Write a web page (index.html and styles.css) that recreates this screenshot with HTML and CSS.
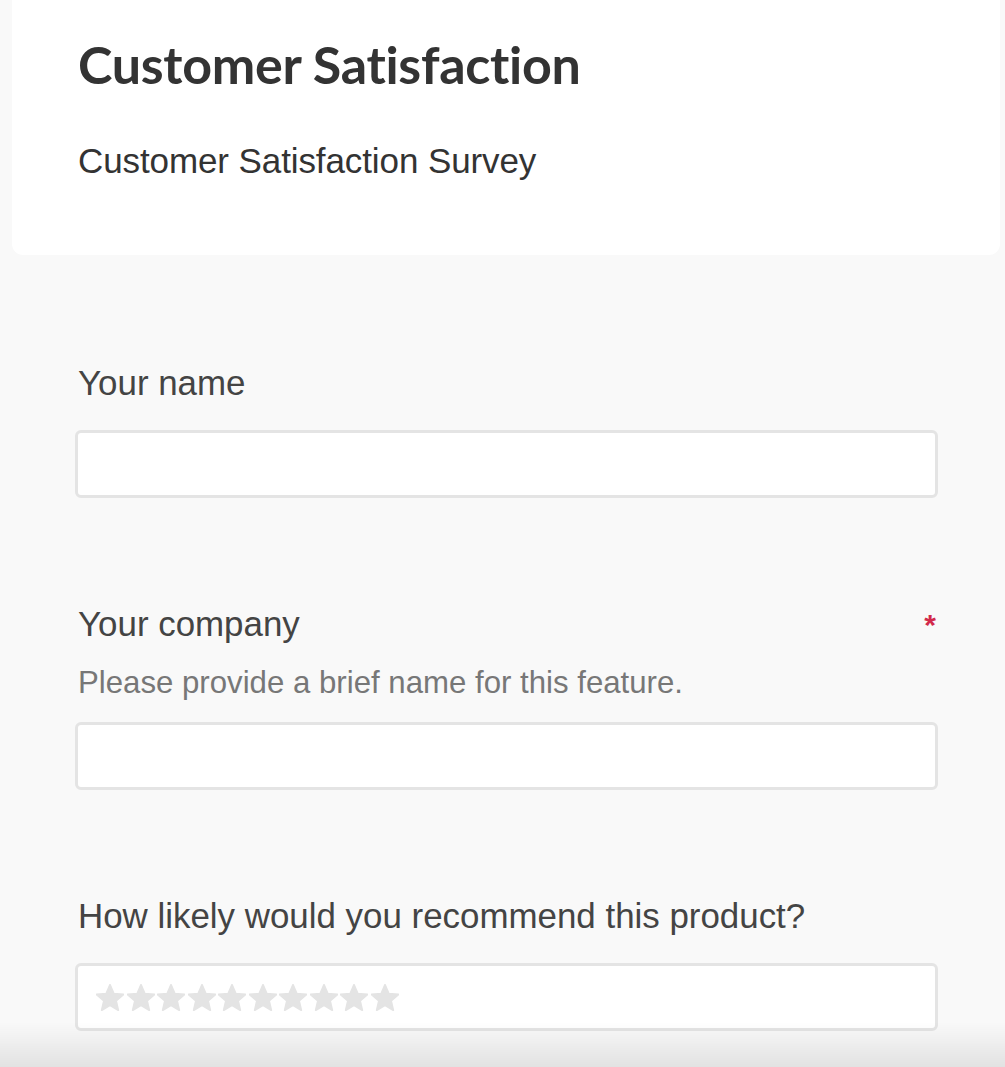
FILE: index.html
```html
<!DOCTYPE html>
<html lang="en">
<head>
<meta charset="utf-8">
<title>Customer Satisfaction</title>
<link rel="stylesheet" href="styles.css">
</head>
<body>
<header class="hero">
  <h1 class="hero-title">Customer Satisfaction</h1>
  <p class="hero-sub">Customer Satisfaction Survey</p>
</header>
<main class="form">
  <div class="field">
    <div class="label-row"><label class="label">Your name</label></div>
    <div class="input"></div>
  </div>
  <div class="field">
    <div class="label-row"><label class="label">Your company</label><span class="req">*</span></div>
    <p class="help">Please provide a brief name for this feature.</p>
    <div class="input"></div>
  </div>
  <div class="field">
    <div class="label-row"><label class="label">How likely would you recommend this product?</label></div>
    <div class="input stars">
      <svg class="star" viewBox="1.5 1.5 21 20"><path d="M12 17.27L18.18 21l-1.64-7.03L22 9.24l-7.19-.61L12 2 9.19 8.63 2 9.24l5.46 4.73L5.820 21z"/></svg>
      <svg class="star" viewBox="1.5 1.5 21 20"><path d="M12 17.27L18.18 21l-1.64-7.03L22 9.24l-7.19-.61L12 2 9.19 8.63 2 9.24l5.46 4.73L5.82 21z"/></svg>
      <svg class="star" viewBox="1.5 1.5 21 20"><path d="M12 17.27L18.18 21l-1.64-7.03L22 9.24l-7.19-.61L12 2 9.19 8.63 2 9.24l5.46 4.73L5.82 21z"/></svg>
      <svg class="star" viewBox="1.5 1.5 21 20"><path d="M12 17.27L18.18 21l-1.64-7.03L22 9.24l-7.19-.61L12 2 9.19 8.63 2 9.24l5.46 4.73L5.82 21z"/></svg>
      <svg class="star" viewBox="1.5 1.5 21 20"><path d="M12 17.27L18.18 21l-1.64-7.03L22 9.24l-7.19-.61L12 2 9.19 8.63 2 9.24l5.46 4.73L5.82 21z"/></svg>
      <svg class="star" viewBox="1.5 1.5 21 20"><path d="M12 17.27L18.18 21l-1.64-7.03L22 9.24l-7.19-.61L12 2 9.19 8.63 2 9.24l5.46 4.73L5.82 21z"/></svg>
      <svg class="star" viewBox="1.5 1.5 21 20"><path d="M12 17.27L18.18 21l-1.64-7.03L22 9.24l-7.19-.61L12 2 9.19 8.63 2 9.24l5.46 4.73L5.82 21z"/></svg>
      <svg class="star" viewBox="1.5 1.5 21 20"><path d="M12 17.27L18.18 21l-1.64-7.03L22 9.24l-7.19-.61L12 2 9.19 8.63 2 9.24l5.46 4.73L5.82 21z"/></svg>
      <svg class="star" viewBox="1.5 1.5 21 20"><path d="M12 17.27L18.18 21l-1.64-7.03L22 9.24l-7.19-.61L12 2 9.19 8.63 2 9.24l5.46 4.73L5.82 21z"/></svg>
      <svg class="star" viewBox="1.5 1.5 21 20"><path d="M12 17.27L18.18 21l-1.64-7.03L22 9.24l-7.19-.61L12 2 9.19 8.63 2 9.24l5.46 4.73L5.82 21z"/></svg>
    </div>
  </div>
</main>
<div class="fade"></div>
</body>
</html>
```
FILE: styles.css
```css
html, body {
  margin: 0;
  padding: 0;
  background: #f9f9f9;
  height: 100%;
  overflow: hidden;
}
body {
  font-family: "Liberation Sans", Arial, sans-serif;
}
.hero {
  background: #fff;
  margin: 0 5px 0 12px;
  border-radius: 0 0 11px 11px;
  padding: 32px 66px 74px 66px;
}
.hero-title {
  margin: 0;
  font-family: Lato, sans-serif;
  font-weight: 700;
  font-size: 52px;
  line-height: 64px;
  letter-spacing: -0.3px;
  color: #333;
}
.hero-sub {
  margin: 45px 0 0;
  font-size: 35px;
  line-height: 40px;
  letter-spacing: -0.1px;
  color: #333;
}
.form {
  padding: 108px 67px 0 75px;
  display: flex;
  flex-direction: column;
  gap: 106px;
}
.label-row {
  display: flex;
  justify-content: space-between;
  align-items: flex-start;
  padding-left: 3px;
}
.label {
  font-size: 34.9px;
  line-height: 40px;
  color: #444;
}
.req {
  color: #d22a4b;
  font-size: 30px;
  font-weight: 700;
  line-height: 40px;
  margin-right: 2px;
  margin-top: 1px;
}
.help {
  margin: 18px 0 0 3px;
  font-size: 31.2px;
  line-height: 40px;
  color: #777;
}
.input {
  height: 62px;
  background: #fff;
  border: 3px solid #e4e4e4;
  border-radius: 6px;
}
.label-row + .input {
  margin-top: 27px;
}
.help + .input {
  margin-top: 19px;
}
.stars {
  display: flex;
  align-items: center;
  padding-left: 18px;
  gap: 2.5px;
}
.star {
  width: 28px;
  height: 27px;
  fill: #e4e4e4;
  stroke: #e4e4e4;
  stroke-width: 1.4;
  stroke-linejoin: round;
}
.fade {
  position: fixed;
  left: 0;
  right: 0;
  bottom: 0;
  height: 45px;
  background: linear-gradient(to bottom, rgba(0,0,0,0), rgba(0,0,0,0.09));
  pointer-events: none;
}
```
